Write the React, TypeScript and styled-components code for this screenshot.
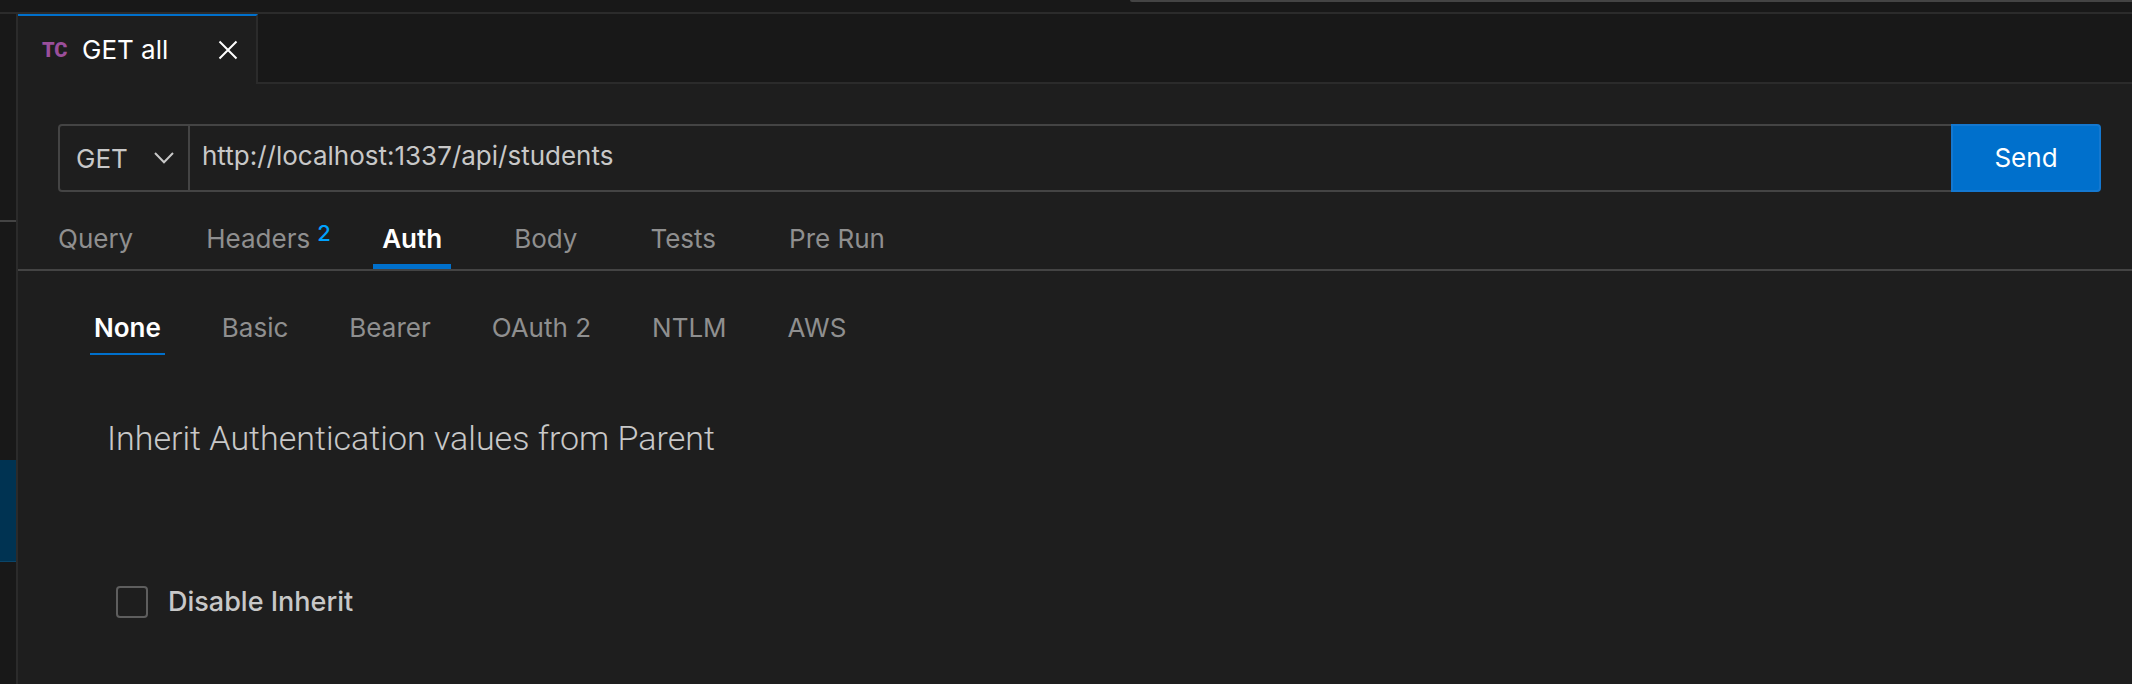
import React, { useState } from "react";
import styled, { createGlobalStyle } from "styled-components";

const color = {
  chrome: "#181818",
  editor: "#1e1e1e",
  line: "#2b2b2b",
  border: "#444444",
  accent: "#0070cc",
  text: "#c8c8c8",
  muted: "#8f8f8f",
};

const GlobalStyle = createGlobalStyle`
  *, *::before, *::after { box-sizing: border-box; }
  body {
    margin: 0;
    background: ${color.editor};
    color: ${color.text};
    font-family: Inter, "Liberation Sans", sans-serif;
    font-size: 26px;
    line-height: 32px;
  }
  button, input, select { font: inherit; color: inherit; margin: 0; }
`;

const Window = styled.div`
  display: flex;
  flex-direction: column;
  min-height: 100vh;
`;

const TitleBar = styled.header`
  display: flex;
  justify-content: flex-end;
  height: 14px;
  background: ${color.chrome};
  border-bottom: 2px solid ${color.line};
`;

const CommandCenter = styled.div`
  width: 47%;
  height: 2px;
  background: ${color.border};
  border-bottom-left-radius: 4px;
`;

const Workspace = styled.div`
  display: flex;
  flex: 1;
`;

const SideBar = styled.aside`
  flex: none;
  width: 18px;
  background: ${color.chrome};
  border-right: 2px solid ${color.line};
`;

const SideSection = styled.div`
  height: 208px;
  border-bottom: 2px solid ${color.border};
`;

const SideSelection = styled.div`
  height: 102px;
  margin-top: 238px;
  background: #003352;
  border-bottom: 1px solid #0b4568;
`;

const Editor = styled.main`
  flex: 1;
  min-width: 0;
`;

const FileTabs = styled.div`
  display: flex;
  height: 70px;
`;

const FileTab = styled.div`
  display: flex;
  align-items: center;
  width: 240px;
  padding: 0 14px 0 24px;
  border-top: 2px solid ${color.accent};
  border-right: 2px solid ${color.line};
  color: #ffffff;
`;

const FileTabsRest = styled.div`
  flex: 1;
  background: ${color.chrome};
  border-bottom: 2px solid ${color.line};
`;

const Logo = styled.span`
  width: 40px;
  color: #9b4f9b;
  font-family: Roboto, "Liberation Sans", sans-serif;
  font-size: 20px;
  font-weight: 900;
`;

const FileName = styled.span`
  flex: 1;
`;

const CloseButton = styled.button`
  display: flex;
  padding: 4px;
  border: 0;
  background: none;
`;

const RequestBar = styled.form`
  display: flex;
  height: 68px;
  margin: 40px 31px 0 40px;
`;

const MethodBox = styled.div`
  display: flex;
  align-items: center;
  position: relative;
  width: 132px;
  border: 2px solid ${color.border};
  border-radius: 4px 0 0 4px;
`;

const MethodSelect = styled.select`
  appearance: none;
  width: 100%;
  height: 100%;
  padding: 2px 0 0 16px;
  border: 0;
  outline: 0;
  background: transparent;
`;

const Chevron = styled.svg`
  position: absolute;
  right: 14px;
  pointer-events: none;
`;

const UrlInput = styled.input`
  flex: 1;
  min-width: 0;
  padding: 0 12px 4px;
  border: solid ${color.border};
  border-width: 2px 0;
  outline: 0;
  background: transparent;
`;

const SendButton = styled.button`
  width: 150px;
  border: 2px solid #1478d0;
  border-radius: 0 4px 4px 0;
  background: ${color.accent};
  color: #ffffff;
`;

const RequestTabs = styled.nav`
  display: flex;
  gap: 53px;
  height: 79px;
  padding: 0 30px;
  border-bottom: 2px solid ${color.border};
`;

const RequestTab = styled.button<{ $active?: boolean }>`
  position: relative;
  padding: 28px ${(p) => (p.$active ? 9 : 10)}px 6px;
  border: 0;
  border-bottom: 5px solid ${(p) => (p.$active ? color.accent : "transparent")};
  background: none;
  color: ${(p) => (p.$active ? "#ffffff" : color.muted)};
  font-weight: ${(p) => (p.$active ? 600 : 400)};
`;

const Count = styled.span`
  position: absolute;
  top: 29px;
  left: 100%;
  margin-left: -3px;
  color: #00a2ff;
  font-size: 22px;
  line-height: 24px;
  font-weight: 500;
`;

const AuthTabs = styled.nav`
  display: flex;
  gap: 53px;
  padding: 36px 72px 0;
`;

const AuthTab = styled.button<{ $active?: boolean }>`
  padding: 5px 4px 9px;
  border: 0;
  border-bottom: 2px solid ${(p) => (p.$active ? color.accent : "transparent")};
  background: none;
  color: ${(p) => (p.$active ? "#ffffff" : color.muted)};
  font-weight: ${(p) => (p.$active ? 600 : 400)};
`;

const Panel = styled.section`
  padding: 62px 89px 48px;
`;

const Heading = styled.h2`
  margin: 0;
  font-family: Roboto, Inter, sans-serif;
  font-size: 34px;
  line-height: 42px;
  font-weight: 300;
`;

const CheckLabel = styled.label`
  display: flex;
  align-items: center;
  gap: 20px;
  width: fit-content;
  margin: 127px 9px 0;
  font-size: 27px;
  font-weight: 500;
`;

const CheckBox = styled.input`
  appearance: none;
  width: 32px;
  height: 32px;
  border: 2px solid #5e5e5e;
  border-radius: 4px;

  &:checked { background: ${color.accent}; }
`;

const requestTabs = ["Query", "Headers", "Auth", "Body", "Tests", "Pre Run"];
const authTabs = ["None", "Basic", "Bearer", "OAuth 2", "NTLM", "AWS"];

export default function App() {
  const [tab, setTab] = useState("Auth");
  const [auth, setAuth] = useState("None");
  const [url, setUrl] = useState("http://localhost:1337/api/students");

  return (
    <Window>
      <GlobalStyle />
      <TitleBar>
        <CommandCenter />
      </TitleBar>
      <Workspace>
        <SideBar>
          <SideSection />
          <SideSelection />
        </SideBar>
        <Editor>
          <FileTabs>
            <FileTab>
              <Logo>TC</Logo>
              <FileName>GET all</FileName>
              <CloseButton aria-label="Close">
                <svg width="20" height="20" viewBox="0 0 20 20" fill="none" stroke="currentColor" strokeWidth="2">
                  <path d="M1.5 1.5 18.5 18.5M18.5 1.5 1.5 18.5" />
                </svg>
              </CloseButton>
            </FileTab>
            <FileTabsRest />
          </FileTabs>

          <RequestBar onSubmit={(e) => e.preventDefault()}>
            <MethodBox>
              <MethodSelect aria-label="Method" defaultValue="GET">
                <option>GET</option>
                <option>POST</option>
                <option>PUT</option>
                <option>DELETE</option>
              </MethodSelect>
              <Chevron width="20" height="12" viewBox="0 0 20 12" fill="none" stroke="currentColor" strokeWidth="2">
                <path d="M1 1 10 10.2 19 1" />
              </Chevron>
            </MethodBox>
            <UrlInput aria-label="Request URL" value={url} onChange={(e) => setUrl(e.target.value)} />
            <SendButton type="submit">Send</SendButton>
          </RequestBar>

          <RequestTabs>
            {requestTabs.map((name) => (
              <RequestTab key={name} $active={name === tab} onClick={() => setTab(name)}>
                {name}
                {name === "Headers" && <Count>2</Count>}
              </RequestTab>
            ))}
          </RequestTabs>

          <AuthTabs>
            {authTabs.map((name) => (
              <AuthTab key={name} $active={name === auth} onClick={() => setAuth(name)}>
                {name}
              </AuthTab>
            ))}
          </AuthTabs>

          <Panel>
            <Heading>Inherit Authentication values from Parent</Heading>
            <CheckLabel>
              <CheckBox type="checkbox" />
              Disable Inherit
            </CheckLabel>
          </Panel>
        </Editor>
      </Workspace>
    </Window>
  );
}
